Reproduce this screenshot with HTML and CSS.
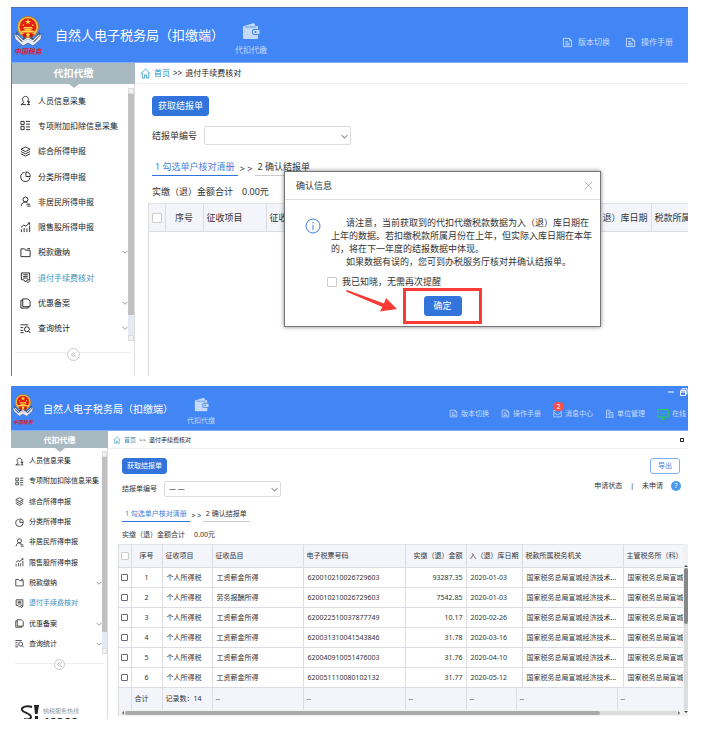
FILE: index.html
```html
<!DOCTYPE html>
<html lang="zh-CN">
<head>
    <meta charset="UTF-8">
    <meta name="viewport" content="width=device-width, initial-scale=1.0">
    <title>自然人电子税务局（扣缴端）</title>
    <link rel="stylesheet" href="styles.css">
</head>
<body>
    <!-- shared icons -->
    <svg class="sprite" aria-hidden="true">
        <symbol id="i-emblem" viewBox="0 0 30 31">
            <path d="M1 17 L8 25 L15 21 L22 25 L29 17 L28 23 L20 30 L15 27 L10 30 L2 23 Z" fill="#e8edf5" stroke="#53658e" stroke-width=".8"/>
            <path d="M3 15 L9 23 L15 19 L21 23 L27 15 L26 20 L21 26 L15 23 L9 26 L4 20 Z" fill="#37466f"/>
            <path d="M4 19 L10 25 L15 22 L20 25 L26 19" fill="none" stroke="#fff" stroke-width="1.2"/>
            <circle cx="15" cy="11" r="10.6" fill="#f0c04a" stroke="#b8701e" stroke-width=".8"/>
            <circle cx="15" cy="10.6" r="8.4" fill="#e3200f"/>
            <path d="M15 2.8 L15.8 4.9 L18 4.9 L16.2 6.2 L16.9 8.3 L15 7 L13.1 8.3 L13.8 6.2 L12 4.9 L14.2 4.9 Z" fill="#ffe14d"/>
            <path d="M9.5 8.5h1.5v1.2H9.5zM19 8.5h1.5v1.2H19zM11 11h8l1 1.5h-10zM11.5 13h7v1.4h-7zM8.5 14.8h13v1.6h-13z" fill="#ffd84a"/>
            <path d="M9 18 L21 18 L19 21.5 L15 20 L11 21.5 Z" fill="#c4190d"/>
            <circle cx="15" cy="18.6" r="1.7" fill="#ffd84a"/>
        </symbol>
        <symbol id="i-wallet" viewBox="0 0 18 18">
            <path d="M2 4 L12 1 L13.5 4 H15 a1 1 0 0 1 1 1 V7 H12 a2 2 0 0 0-2 2v2a2 2 0 0 0 2 2h4v3a1 1 0 0 1-1 1H2a1 1 0 0 1-1-1V5a1 1 0 0 1 1-1z" fill="currentColor"/>
            <path d="M3 5 H14" stroke="#4285f4" stroke-width=".8"/>
            <path d="M12 8h5.5v4H12a1 1 0 0 1-1-1V9a1 1 0 0 1 1-1z" fill="currentColor"/>
            <circle cx="13.5" cy="10" r="1" fill="#4285f4"/>
        </symbol>
        <symbol id="i-doc" viewBox="0 0 12 12">
            <path d="M1.5 1.5h6.5l2.5 2.5v6.5h-9zM8 1.5v2.5h2.5M3.5 5h3M3.5 6.8h5M3.5 8.6h5"/>
        </symbol>
        <symbol id="i-mail" viewBox="0 0 12 12">
            <path d="M1 2h10v8.5H1zM1 4.5l5 3.5 5-3.5"/>
        </symbol>
        <symbol id="i-building" viewBox="0 0 12 12">
            <path d="M1 11h10.5M2 11V1.5h4.5V11M6.5 4.5h4V11M3.5 4h1.5M3.5 6h1.5M3.5 8h1.5M8 7h1M8 9h1"/>
        </symbol>
        <symbol id="i-monitor" viewBox="0 0 12 12">
            <path d="M.8 1.5h10.4v7.5H.8zM4 11.2h4M6 9v2M4 5l1.6 1.6L8.5 4"/>
        </symbol>
        <symbol id="i-home" viewBox="0 0 12 12">
            <path d="M.8 6.2L6 1l5.2 5.2M2.500 5v6h2.500V7.500h2V11h2.500V5"/>
        </symbol>
        <symbol id="i-person" viewBox="0 0 12 12">
            <path d="M1 10.5h5.5M4 7.5C2 6 2.5 1.5 6 1.5s4 4.5 2 6M4 7.5v1L1 10.5M8 7.5h3M9.5 6v4.5M7.5 10.5H11"/>
        </symbol>
        <symbol id="i-list" viewBox="0 0 12 12">
            <path d="M1 1.5h3.5V5H1zM1 7h3.5v3.5H1zM6.5 1.5H11M6.5 4.5H11M6.5 7.5H11M6.5 10.5H11"/>
        </symbol>
        <symbol id="i-layers" viewBox="0 0 12 12">
            <path d="M6 1L11 3.5 6 6 1 3.5zM1 6l5 2.5L11 6M1 8.5L6 11l5-2.5"/>
        </symbol>
        <symbol id="i-pie" viewBox="0 0 12 12">
            <path d="M5 1.5A5 5 0 1 0 10.8 7M6.5 1v5h4.7A5 5 0 0 0 6.5 1z"/>
        </symbol>
        <symbol id="i-user" viewBox="0 0 12 12">
            <circle cx="6" cy="3.8" r="2.7"/>
            <path d="M1.5 11c0-3 2-4.5 4-4.5 1.5 0 2.5.5 3 1.5M7 9h4M8 11h3.5"/>
        </symbol>
        <symbol id="i-chart" viewBox="0 0 12 12">
            <path d="M1.5 11V8M4.5 11V6.5M7.5 11V7M10.5 11V4M1 6l3-2.5 2.5 1L10.5 1M8.5 1h2v2"/>
        </symbol>
        <symbol id="i-folder" viewBox="0 0 12 12">
            <path d="M1 10.5V2h4l1 1.5h5v7zM8 1.8h3"/>
        </symbol>
        <symbol id="i-refund" viewBox="0 0 12 12">
            <path d="M1.5 8.5V1h9v7.5H8L6 11 4 8.5zM3.5 3h5M3.5 4.8h5M3.5 6.6h5M7.5 10.5L9 11.5l2-2.5"/>
        </symbol>
        <symbol id="i-copy" viewBox="0 0 12 12">
            <path d="M3 1h5.5L11 3.5V9.5H3zM3 2.5H1V11h8V9.5"/>
        </symbol>
        <symbol id="i-search" viewBox="0 0 12 12">
            <path d="M.5 2H9M.5 5h3M.5 8h3M.5 10.5H4"/>
            <circle cx="7.5" cy="6.8" r="2.7"/>
            <path d="M9.5 8.8L11.5 11"/>
        </symbol>
        <symbol id="i-down" viewBox="0 0 12 12">
            <path d="M1 3.5l5 5 5-5"/>
        </symbol>
        <symbol id="i-close" viewBox="0 0 12 12">
            <path d="M1 1l10 10M11 1L1 11"/>
        </symbol>
        <symbol id="i-collapse" viewBox="0 0 12 12">
            <path d="M6 2.5L2.5 6 6 9.5M10 2.5L6.5 6 10 9.5"/>
        </symbol>
    </svg>

    <!-- large window with the confirm dialog -->
    <section class="window large">
        <header class="topbar">
            <div class="brand">
                <svg class="emblem"><use href="#i-emblem"/></svg>
                <span class="emblem-name">中国税务</span>
            </div>
            <h1>自然人电子税务局（扣缴端）</h1>
            <a class="module" href="#"><svg><use href="#i-wallet"/></svg>代扣代缴</a>
            <nav class="toplinks">
                <a href="#"><svg class="icon"><use href="#i-doc"/></svg>版本切换</a>
                <a href="#"><svg class="icon"><use href="#i-doc"/></svg>操作手册</a>
            </nav>
        </header>
        <div class="body">
            <aside class="sidebar">
                <h2>代扣代缴</h2>
                <div class="menu-wrap">
                    <nav class="menu">
                        <a href="#"><svg class="icon"><use href="#i-person"/></svg>人员信息采集</a>
                        <a href="#"><svg class="icon"><use href="#i-list"/></svg>专项附加扣除信息采集</a>
                        <a href="#"><svg class="icon"><use href="#i-layers"/></svg>综合所得申报</a>
                        <a href="#"><svg class="icon"><use href="#i-pie"/></svg>分类所得申报</a>
                        <a href="#"><svg class="icon"><use href="#i-user"/></svg>非居民所得申报</a>
                        <a href="#"><svg class="icon"><use href="#i-chart"/></svg>限售股所得申报</a>
                        <a href="#"><svg class="icon"><use href="#i-folder"/></svg>税款缴纳<svg class="icon arrow"><use href="#i-down"/></svg></a>
                        <a href="#" class="active"><svg class="icon"><use href="#i-refund"/></svg>退付手续费核对</a>
                        <a href="#"><svg class="icon"><use href="#i-copy"/></svg>优惠备案<svg class="icon arrow"><use href="#i-down"/></svg></a>
                        <a href="#"><svg class="icon"><use href="#i-search"/></svg>查询统计<svg class="icon arrow"><use href="#i-down"/></svg></a>
                    </nav>
                    <div class="vscroll"><span class="up"></span><span class="thumb"></span><span class="down"></span></div>
                </div>
                <div class="fold"><button type="button" aria-label="收起"><svg class="icon"><use href="#i-collapse"/></svg></button></div>
            </aside>
            <main class="main">
                <div class="crumbs"><svg class="icon"><use href="#i-home"/></svg><a href="#">首页</a><span>&gt;&gt;</span><span>退付手续费核对</span></div>
                <div class="content">
                    <div class="actions"><button type="button" class="btn">获取结报单</button></div>
                    <div class="field">
                        <label for="bill1">结报单编号</label>
                        <span class="select"><select id="bill1"><option></option></select><svg class="icon"><use href="#i-down"/></svg></span>
                    </div>
                    <div class="steps"><span class="step on">1 勾选单户核对清册</span><span class="sep">&gt; &gt;</span><span class="step">2 确认结报单</span></div>
                    <div class="total"><span>实缴（退）金额合计</span><span>0.00元</span></div>
                    <div class="grid">
                        <table>
                            <colgroup><col class="a-check"><col class="a-no"><col class="a-item"><col class="a-kind"><col><col class="a-date"><col class="a-office"></colgroup>
                            <thead>
                                <tr>
                                    <th class="check"><input type="checkbox" aria-label="全选"></th>
                                    <th class="no">序号</th>
                                    <th>征收项目</th>
                                    <th>征收</th>
                                    <th></th>
                                    <th class="num">退）库日期</th>
                                    <th>税款所属</th>
                                </tr>
                            </thead>
                        </table>
                    </div>
                </div>
            </main>
        </div>

        <div class="dialog" role="dialog" aria-labelledby="dlg-title">
            <div class="dialog-head">
                <h3 id="dlg-title">确认信息</h3>
                <button type="button" class="close" aria-label="关闭"><svg class="icon"><use href="#i-close"/></svg></button>
            </div>
            <div class="dialog-body">
                <svg class="info" viewBox="0 0 16 16"><circle cx="8" cy="8" r="7"/><path d="M8 7v5M8 4v1.3"/></svg>
                <div class="message">
                    <p>请注意，当前获取到的代扣代缴税款数据为入（退）库日期在上年的数据。若扣缴税款所属月份在上年，但实际入库日期在本年的，将在下一年度的结报数据中体现。</p>
                    <p>如果数据有误的，您可到办税服务厅核对并确认结报单。</p>
                </div>
            </div>
            <label class="ack"><input type="checkbox">我已知晓，无需再次提醒</label>
            <div class="dialog-foot"><button type="button" class="btn">确定</button></div>
            <svg class="pointer" viewBox="0 0 52 24"><path d="M0 1.5 L1 0 L38 13.5 L40 8 L51 19 L34 21.5 L36.5 17 Z"/></svg>
            <div class="mark"></div>
        </div>
    </section>

    <!-- small window with the loaded list -->
    <section class="window small">
        <header class="topbar">
            <div class="brand">
                <svg class="emblem"><use href="#i-emblem"/></svg>
                <span class="emblem-name">中国税务</span>
            </div>
            <h1>自然人电子税务局（扣缴端）</h1>
            <a class="module" href="#"><svg><use href="#i-wallet"/></svg>代扣代缴</a>
            <nav class="toplinks">
                <a href="#"><svg class="icon"><use href="#i-doc"/></svg>版本切换</a>
                <a href="#"><svg class="icon"><use href="#i-doc"/></svg>操作手册</a>
                <a href="#" class="mail"><svg class="icon"><use href="#i-mail"/></svg>消息中心<b class="badge">2</b></a>
                <a href="#"><svg class="icon"><use href="#i-building"/></svg>单位管理</a>
                <a href="#" class="online"><svg class="icon"><use href="#i-monitor"/></svg>在线</a>
            </nav>
            <svg class="winctl" viewBox="0 0 20 8"><path d="M0 4h6M12.5 2.5h5v5h-5zM12.5 4h5M14 2.5V.8h5v5h-1.5"/></svg>
        </header>
        <div class="body">
            <aside class="sidebar">
                <h2>代扣代缴</h2>
                <div class="menu-wrap">
                    <nav class="menu">
                        <a href="#"><svg class="icon"><use href="#i-person"/></svg>人员信息采集</a>
                        <a href="#"><svg class="icon"><use href="#i-list"/></svg>专项附加扣除信息采集</a>
                        <a href="#"><svg class="icon"><use href="#i-layers"/></svg>综合所得申报</a>
                        <a href="#"><svg class="icon"><use href="#i-pie"/></svg>分类所得申报</a>
                        <a href="#"><svg class="icon"><use href="#i-user"/></svg>非居民所得申报</a>
                        <a href="#"><svg class="icon"><use href="#i-chart"/></svg>限售股所得申报</a>
                        <a href="#"><svg class="icon"><use href="#i-folder"/></svg>税款缴纳<svg class="icon arrow"><use href="#i-down"/></svg></a>
                        <a href="#" class="active"><svg class="icon"><use href="#i-refund"/></svg>退付手续费核对</a>
                        <a href="#"><svg class="icon"><use href="#i-copy"/></svg>优惠备案<svg class="icon arrow"><use href="#i-down"/></svg></a>
                        <a href="#"><svg class="icon"><use href="#i-search"/></svg>查询统计<svg class="icon arrow"><use href="#i-down"/></svg></a>
                    </nav>
                    <div class="vscroll"><span class="up"></span><span class="thumb"></span><span class="down"></span></div>
                </div>
                <div class="fold"><button type="button" aria-label="收起"><svg class="icon"><use href="#i-collapse"/></svg></button></div>
                <div class="hotline">
                    <svg viewBox="0 0 20 16"><path d="M12 2C7 0 1 2 2 5c1 3 9 3 9 7 0 2-4 3-7 2" fill="none" stroke="#222" stroke-width="2"/><path d="M14 0h5l-1.5 9h-2.5zM15 11h3v3h-3z" fill="#222"/></svg>
                    <div><span>纳税服务热线</span><strong>12366</strong></div>
                </div>
            </aside>
            <main class="main">
                <div class="crumbs"><svg class="icon"><use href="#i-home"/></svg><a href="#">首页</a><span>&gt;&gt;</span><span>退付手续费核对</span><i class="restore"></i></div>
                <div class="content">
                    <div class="actions"><button type="button" class="btn">获取结报单</button><button type="button" class="btn outline">导出</button></div>
                    <div class="field">
                        <label for="bill2">结报单编号</label>
                        <span class="select"><select id="bill2"><option>— —</option></select><svg class="icon"><use href="#i-down"/></svg></span>
                        <div class="status"><span>申请状态</span><span>|</span><span>未申请</span><button type="button" class="help" aria-label="帮助">?</button></div>
                    </div>
                    <div class="steps"><span class="step on">1 勾选单户核对清册</span><span class="sep">&gt; &gt;</span><span class="step">2 确认结报单</span></div>
                    <div class="total"><span>实缴（退）金额合计</span><span>0.00元</span></div>
                    <div class="grid">
                        <div class="tables">
                            <table>
                                <colgroup><col class="b-check"><col class="b-no"><col class="b-item"><col class="b-kind"><col class="b-ticket"><col class="b-sum"><col class="b-date"><col class="b-org"><col></colgroup>
                                <thead>
                                    <tr>
                                        <th class="check"><input type="checkbox" aria-label="全选"></th>
                                        <th class="no">序号</th>
                                        <th>征收项目</th>
                                        <th>征收品目</th>
                                        <th>电子税票号码</th>
                                        <th class="num">实缴（退）金额</th>
                                        <th>入（退）库日期</th>
                                        <th>税款所属税务机关</th>
                                        <th>主管税务所（科）</th>
                                    </tr>
                                </thead>
                                <tbody>
                                    <tr><td class="check"><input type="checkbox" aria-label="选择 1"></td><td class="no">1</td><td>个人所得税</td><td>工资薪金所得</td><td>620010210026729603</td><td class="num">93287.35</td><td>2020-01-03</td><td>国家税务总局宣城经济技术...</td><td>国家税务总局宣城</td></tr>
                                    <tr><td class="check"><input type="checkbox" aria-label="选择 2"></td><td class="no">2</td><td>个人所得税</td><td>劳务报酬所得</td><td>620010210026729603</td><td class="num">7542.85</td><td>2020-01-03</td><td>国家税务总局宣城经济技术...</td><td>国家税务总局宣城</td></tr>
                                    <tr><td class="check"><input type="checkbox" aria-label="选择 3"></td><td class="no">3</td><td>个人所得税</td><td>工资薪金所得</td><td>620022510037877749</td><td class="num">10.17</td><td>2020-02-26</td><td>国家税务总局宣城经济技术...</td><td>国家税务总局宣城</td></tr>
                                    <tr><td class="check"><input type="checkbox" aria-label="选择 4"></td><td class="no">4</td><td>个人所得税</td><td>工资薪金所得</td><td>620031310041543846</td><td class="num">31.78</td><td>2020-03-16</td><td>国家税务总局宣城经济技术...</td><td>国家税务总局宣城</td></tr>
                                    <tr><td class="check"><input type="checkbox" aria-label="选择 5"></td><td class="no">5</td><td>个人所得税</td><td>工资薪金所得</td><td>620040910051476003</td><td class="num">31.76</td><td>2020-04-10</td><td>国家税务总局宣城经济技术...</td><td>国家税务总局宣城</td></tr>
                                    <tr><td class="check"><input type="checkbox" aria-label="选择 6"></td><td class="no">6</td><td>个人所得税</td><td>工资薪金所得</td><td>620051110080102132</td><td class="num">31.77</td><td>2020-05-12</td><td>国家税务总局宣城经济技术...</td><td>国家税务总局宣城</td></tr>
                                </tbody>
                            </table>
                            <table class="sum">
                                <colgroup><col class="b-check"><col class="b-no"><col class="b-item"><col class="b-kind"><col class="b-ticket"><col class="b-sum"><col class="b-item"><col class="b-org"><col></colgroup>
                                <tbody>
                                    <tr><td></td><td>合计</td><td>记录数：14</td><td>--</td><td>--</td><td>--</td><td>--</td><td>--</td><td>--</td></tr>
                                </tbody>
                            </table>
                            <div class="hscroll"><span class="left"></span><span class="track"><span class="thumb"></span></span><span class="right"></span></div>
                        </div>
                        <div class="gridscroll"><span class="up"></span><span class="track"><span class="thumb"></span></span><span class="down"></span></div>
                    </div>
                </div>
            </main>
        </div>
    </section>
</body>
</html>
```
FILE: styles.css
```css
* {
    box-sizing: border-box;
}
body {
    margin: 0;
    padding: 7px 17px 18px 11px;
    background: #fff;
    color: #333;
    font-family: "Noto Sans", "Noto Sans CJK SC", sans-serif;
}
h1, h2, h3, p {
    margin: 0;
    font-weight: normal;
}
a {
    color: inherit;
    text-decoration: none;
}
button, select, input {
    margin: 0;
    padding: 0;
    font: inherit;
    color: inherit;
}
.sprite {
    position: absolute;
    width: 0;
    height: 0;
}
.icon {
    flex: none;
    width: var(--icon);
    height: var(--icon);
    fill: none;
    stroke: currentColor;
}

/* window */
.window {
    position: relative;
    overflow: hidden;
    font-size: var(--text);
    line-height: 12px;
}
.large {
    --text: 9px;
    --menu: 8px;
    --icon: 11px;
    margin-bottom: 10px;
}
.small {
    --text: 7px;
    --menu: 7px;
    --icon: 9px;
}
.body {
    display: flex;
}

/* top bar */
.topbar {
    position: relative;
    display: flex;
    align-items: center;
    height: 56px;
    padding: 0 15px 0 2px;
    background: #4285f4;
    border-top: 1px solid #4a6fb5;
    border-bottom: 1px solid #82aef5;
    color: #fff;
}
.brand {
    display: flex;
    flex-direction: column;
    align-items: center;
    width: 30px;
}
.emblem {
    width: 30px;
    height: 31px;
}
.emblem-name {
    color: #d8202c;
    font: italic bold 7px/8px "Noto Sans CJK SC", sans-serif;
    white-space: nowrap;
}
.topbar h1 {
    margin-left: 12px;
    font-size: 13px;
    line-height: 20px;
    white-space: nowrap;
}
.module {
    display: flex;
    flex-direction: column;
    align-items: center;
    gap: 5px;
    margin-left: 11px;
    padding-top: 6px;
    color: #c5daf9;
    font-size: 8px;
    line-height: 10px;
    white-space: nowrap;
}
.module svg {
    width: 18px;
    height: 18px;
}
.toplinks {
    display: flex;
    gap: 15px;
    margin-left: auto;
    padding-top: 14px;
    color: #c9dcfb;
    font-size: 8px;
    white-space: nowrap;
}
.toplinks a {
    position: relative;
    display: flex;
    align-items: center;
    gap: 5px;
}
.small .topbar {
    height: 45px;
    padding: 0 2px 0 1px;
    border-top-color: #4285f4;
}
.small .brand {
    width: 22px;
}
.small .emblem {
    width: 22px;
    height: 25px;
}
.small .emblem-name {
    font-size: 5px;
    line-height: 7px;
}
.small .topbar h1 {
    margin-left: 9px;
    font-size: 10px;
}
.small .module {
    gap: 4px;
    margin-left: 14px;
    padding-top: 5px;
    font-size: 7px;
    line-height: 9px;
}
.small .module svg {
    width: 15px;
    height: 15px;
}
.small .toplinks {
    gap: 12px;
    padding-top: 10px;
    font-size: 7px;
}
.small .toplinks a {
    gap: 3px;
}
.toplinks .online .icon {
    width: 12px;
    height: 12px;
    color: #25d04c;
}
.badge {
    position: absolute;
    left: 0;
    top: -6px;
    width: 11px;
    height: 9px;
    border-radius: 5px;
    background: #f5504d;
    color: #fff;
    font-size: 7px;
    font-weight: normal;
    line-height: 9px;
    text-align: center;
}
.winctl {
    position: absolute;
    right: 0;
    top: 1px;
    width: 20px;
    height: 8px;
    fill: none;
    stroke: #fff;
}

/* side menu */
.sidebar {
    flex: none;
    width: 124px;
    border-left: 1px solid #777;
    border-right: 1px solid #ddd;
}
.sidebar h2 {
    position: relative;
    height: 21px;
    margin-right: -1px;
    background: #a9b9c2;
    color: #fff;
    font-size: 10px;
    font-weight: bold;
    line-height: 21px;
    text-align: center;
}
.sidebar h2::after {
    content: "";
    position: absolute;
    left: 50%;
    top: 100%;
    margin-left: -5px;
    border: 5px solid transparent;
    border-top: 4px solid #a9b9c2;
    border-bottom: 0;
}
.menu-wrap {
    display: flex;
    padding-top: 4px;
}
.menu {
    flex: 1;
    display: flex;
    flex-direction: column;
    height: 253px;
}
.menu a {
    flex: 1;
    display: flex;
    align-items: center;
    gap: 7px;
    padding-left: 8px;
    color: #222;
    font-size: var(--menu);
    white-space: nowrap;
}
.menu .active {
    color: #3d8fb8;
}
.menu .active .icon {
    color: #222;
}
.menu .arrow {
    width: 6px;
    height: 6px;
    margin-left: auto;
    stroke-width: 2;
    color: #999;
}
.vscroll {
    display: flex;
    flex-direction: column;
    justify-content: space-between;
    width: 6px;
    background: #e4e9f3;
}
.vscroll .thumb {
    flex: none;
    height: 221px;
    margin-bottom: auto;
    background: #c2bfc3;
}
.up, .down {
    height: 6px;
    background: #f1f1f1;
    border: 1px solid #ddd;
}
.fold {
    display: flex;
    justify-content: center;
    margin: 4px 3px 0;
    background: linear-gradient(#eee, #eee) no-repeat 0 7px / 100% 1px;
}
.fold button {
    display: flex;
    align-items: center;
    justify-content: center;
    width: 13px;
    height: 13px;
    margin-top: 3px;
    border: 1px solid #ccc;
    border-radius: 50%;
    background: #fff;
    color: #888;
}
.fold .icon {
    width: 7px;
    height: 7px;
}
.small .sidebar {
    display: flex;
    flex-direction: column;
    width: 97px;
    border-left-color: #fff;
}
.small .sidebar h2 {
    height: 17px;
    margin-left: -1px;
    font-size: 8px;
    line-height: 17px;
}
.small .menu-wrap {
    padding-top: 3px;
}
.small .menu {
    height: 203px;
}
.small .menu a {
    gap: 5px;
    padding-left: 3px;
}
.small .vscroll {
    width: 5px;
}
.small .vscroll .thumb {
    height: 175px;
}
.small .fold {
    margin-top: 2px;
}
.small .fold button {
    width: 11px;
    height: 11px;
}
.hotline {
    display: flex;
    gap: 3px;
    height: 14px;
    margin-top: auto;
    padding-left: 8px;
    overflow: hidden;
    color: #999;
    font-size: 6px;
}
.hotline svg {
    flex: none;
    width: 20px;
    height: 16px;
}
.hotline strong {
    display: block;
    color: #222;
    font-size: 12px;
    line-height: 12px;
}

/* main area */
.main {
    flex: 1;
    min-width: 0;
    display: flex;
    flex-direction: column;
}
.crumbs {
    display: flex;
    align-items: center;
    gap: 3px;
    height: 21px;
    padding-left: 5px;
    border-bottom: 1px solid #f0f0f0;
    color: #222;
    font-size: 8px;
}
.crumbs .icon {
    color: #45a5cf;
}
.crumbs a {
    color: #1f8fc0;
}
.content {
    flex: 1;
    display: flex;
    flex-direction: column;
    padding: 12px 0 0 17px;
}
.actions {
    display: flex;
    justify-content: space-between;
}
.btn {
    height: 20px;
    padding: 0 5px;
    border: 1px solid #3273dc;
    border-radius: 3px;
    background: #3273dc;
    color: #fff;
}
.field {
    display: flex;
    align-items: center;
    margin-top: 10px;
}
.select {
    position: relative;
    width: 147px;
    margin-left: 7px;
}
.select select {
    display: block;
    width: 100%;
    height: 19px;
    padding-left: 4px;
    border: 1px solid #ddd;
    border-radius: 2px;
    background: #fff;
    appearance: none;
}
.select .icon {
    position: absolute;
    right: 3px;
    top: 50%;
    width: 7px;
    height: 7px;
    margin-top: -3px;
    color: #999;
    stroke-width: 2;
}
.steps {
    display: flex;
    align-items: center;
    margin-top: 13px;
    white-space: nowrap;
}
.step {
    height: 18px;
    padding: 0 3px;
    border-bottom: 1px solid #ccc;
    line-height: 18px;
}
.step.on {
    border-bottom-color: #3273dc;
    color: #3f7fdd;
}
.sep {
    width: 17px;
    padding-top: 4px;
    text-align: center;
}
.total {
    display: flex;
    gap: 9px;
    margin-top: 10px;
    white-space: nowrap;
}

/* list */
.grid {
    flex: 1;
    margin: 5px 0 0 -4px;
    border-left: 1px solid #ddd;
    overflow: hidden;
}
table {
    width: 100%;
    table-layout: fixed;
    border-collapse: collapse;
}
th, td {
    height: 28px;
    padding: 0 0 0 3px;
    border-right: 1px solid #dcdde4;
    border-bottom: 1px solid #dcdde4;
    font-weight: normal;
    text-align: left;
    white-space: nowrap;
    overflow: hidden;
}
th:last-child, td:last-child {
    border-right: 0;
}
th {
    background: #f4f5fa;
    border-top: 1px solid #e3e4ea;
}
th.check, td.check {
    padding: 0;
    text-align: center;
}
.no {
    padding: 0;
    text-align: center;
}
.num {
    padding: 0 3px 0 0;
    text-align: right;
}
input[type="checkbox"] {
    appearance: none;
    display: inline-block;
    width: 10px;
    height: 10px;
    border: 1px solid #ccc;
    border-radius: 1px;
    background: #fff;
    vertical-align: middle;
}
.a-check { width: 16px; }
.a-no { width: 38px; }
.a-item { width: 63px; }
.a-kind { width: 90px; }
.a-date { width: 75px; }
.a-office { width: 37px; }
.large .body {
    min-height: 313px;
}

/* small window sizes */
.small .crumbs {
    height: 18px;
    font-size: 6px;
    padding-right: 4px;
}
.small .crumbs .icon {
    width: 8px;
    height: 8px;
}
.restore {
    width: 4px;
    height: 4px;
    margin-left: auto;
    border: 1px solid #333;
}
.small .content {
    padding: 9px 0 3px 14px;
}
.small .btn {
    height: 16px;
    padding: 0 4px;
}
.small .actions {
    padding-right: 8px;
}
.small .outline {
    padding: 0 7px;
    border-color: #82aef5;
    background: #fff;
    color: #3f7fdd;
}
.small .field {
    margin-top: 7px;
}
.small .select {
    width: 117px;
    margin-left: 7px;
}
.small .select select {
    height: 16px;
}
.status {
    display: flex;
    align-items: center;
    gap: 8px;
    margin: -6px 7px 0 auto;
}
.help {
    width: 10px;
    height: 10px;
    border: 0;
    border-radius: 50%;
    background: #4a9bf0;
    color: #fff;
    line-height: 10px;
}
.small .steps {
    margin-top: 9px;
}
.small .step {
    height: 16px;
    line-height: 15px;
}
.small .sep {
    width: 13px;
}
.small .total {
    margin-top: 7px;
}
.small .grid {
    display: flex;
    margin: 3px 0 0 -4px;
}
.tables {
    flex: 1;
    min-width: 0;
}
.small th {
    height: 23px;
}
.small td {
    height: 20px;
    padding-left: 4px;
}
.small td.no, .small td.check {
    padding: 0;
}
.small input[type="checkbox"] {
    width: 8px;
    height: 8px;
}
.small td input[type="checkbox"] {
    width: 7px;
    height: 7px;
    border-color: #667;
}
.small .sum td {
    height: 22px;
    padding-left: 3px;
    background: #f4f5fa;
    border-bottom: 0;
}
.b-check { width: 12px; }
.b-no { width: 31px; }
.b-item { width: 50px; }
.b-kind { width: 91px; }
.b-ticket { width: 102px; }
.b-sum { width: 61px; }
.b-date { width: 56px; }
.b-org { width: 101px; }
.hscroll, .gridscroll {
    display: flex;
    align-items: center;
    background: #f1f1f1;
}
.hscroll {
    height: 6px;
}
.gridscroll {
    flex-direction: column;
    width: 5px;
    padding-top: 18px;
}
.hscroll .track, .gridscroll .track {
    flex: 1;
    background: #ddd;
}
.hscroll .track {
    height: 4px;
}
.gridscroll .track {
    width: 4px;
}
.hscroll .thumb, .gridscroll .thumb {
    display: block;
    border-radius: 2px;
    background: #aaa;
}
.hscroll .thumb {
    width: 86%;
    height: 4px;
}
.gridscroll .thumb {
    height: 56px;
    background: #888;
}
.left, .right, .gridscroll .up, .gridscroll .down {
    width: 0;
    height: 0;
    margin: 1px;
    background: none;
    border: 2px solid transparent;
}
.left {
    border-right-color: #666;
}
.right {
    border-left-color: #666;
}
.gridscroll .up {
    border-bottom-color: #444;
}
.gridscroll .down {
    border-top-color: #444;
}

/* confirm dialog */
.dialog {
    position: absolute;
    left: 273px;
    top: 164px;
    width: 317px;
    height: 156px;
    border: 1px solid #777;
    background: #fff;
    box-shadow: 0 0 4px rgba(0, 0, 0, 0.5);
}
.dialog-head {
    display: flex;
    align-items: center;
    justify-content: space-between;
    height: 28px;
    padding: 0 7px 0 11px;
    border-bottom: 1px solid #ddd;
}
.dialog-head h3 {
    font-size: 9px;
}
.close {
    display: flex;
    border: 0;
    background: none;
    color: #999;
}
.close .icon {
    width: 9px;
    height: 9px;
}
.dialog-body {
    display: flex;
    gap: 10px;
    padding: 16px 0 0 20px;
}
.info {
    flex: none;
    width: 16px;
    height: 16px;
    margin-top: 2px;
    fill: none;
    stroke: #3f7fdd;
}
.message {
    width: 265px;
    line-height: 13px;
}
.message p {
    text-indent: 15px;
}
.ack {
    display: flex;
    align-items: center;
    gap: 5px;
    margin: 8px 0 0 42px;
}
.dialog-foot {
    display: flex;
    justify-content: center;
    margin-top: 8px;
}
.dialog-foot .btn {
    width: 38px;
}
.pointer {
    position: absolute;
    left: 61px;
    top: 118px;
    width: 52px;
    height: 24px;
    fill: #fa3a35;
}
.mark {
    position: absolute;
    left: 118px;
    top: 116px;
    width: 79px;
    height: 36px;
    border: 3px solid #fa3a35;
}
```
